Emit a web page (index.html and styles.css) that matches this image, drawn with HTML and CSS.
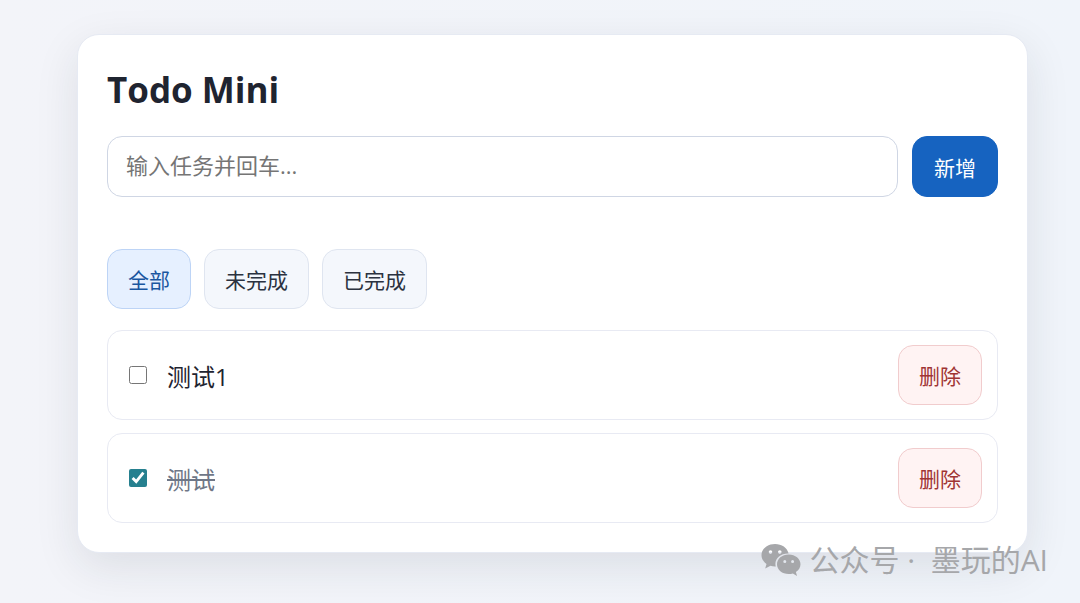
FILE: index.html
```html
<!DOCTYPE html>
<html lang="zh-CN">
  <head>
    <meta charset="UTF-8" />
    <meta name="viewport" content="width=device-width, initial-scale=1.0" />
    <link rel="stylesheet" href="styles.css">
    <title>Todo Mini</title>
  </head>
  <body>
    <main class="card">
      <h1>Todo Mini</h1>
      <form class="add-form">
        <input
          type="text"
          class="task-input"
          placeholder="输入任务并回车..."
          aria-label="输入任务"
        />
        <button type="submit" class="btn add-btn">新增</button>
      </form>

      <div class="filters">
        <button type="button" class="btn active">全部</button>
        <button type="button" class="btn">未完成</button>
        <button type="button" class="btn">已完成</button>
      </div>

      <ul class="list">
        <li class="item">
          <input type="checkbox" id="task-1" />
          <label for="task-1">测试1</label>
          <button type="button" class="btn delete-btn">删除</button>
        </li>
        <li class="item done">
          <input type="checkbox" id="task-2" checked />
          <label for="task-2">测试</label>
          <button type="button" class="btn delete-btn">删除</button>
        </li>
      </ul>
    </main>

    <div class="watermark">
      <svg class="wechat" viewBox="0 0 40 34" aria-hidden="true">
        <path fill-rule="evenodd" d="M14 1C6.500 1 .5 5.800 .5 12.200c0 3.500 1.900 6.600 5 8.700L4.200 25.500l5.300-2.700c1.700.5 3.300.7 5.300.6-.3-1-.4-1.700-.4-2.500 0-5.800 5.500-10.400 12.400-10.400h.8C26.300 4.800 20.800 1 14 1zM9.500 7.300a1.800 1.800 0 1 1 0 3.600 1.800 1.800 0 0 1 0-3.600zm9.300 0a1.800 1.800 0 1 1 0 3.600 1.800 1.800 0 0 1 0-3.600z"/>
        <path fill-rule="evenodd" d="M27.700 11.500c-6.600 0-11.700 4.300-11.700 9.800s5.100 9.800 11.700 9.800c1.500 0 2.900-.2 4.200-.6l4.100 2.500-1.100-3.900c2.800-1.900 4.600-4.500 4.600-7.800 0-5.500-5.200-9.800-11.800-9.800zM23.800 17a1.500 1.500 0 1 1 0 3 1.500 1.500 0 0 1 0-3zm7.800 0a1.500 1.500 0 1 1 0 3 1.500 1.500 0 0 1 0-3z"/>
      </svg>
      <span>公众号 ·&nbsp; 墨玩的AI</span>
    </div>
  </body>
</html>
```
FILE: styles.css
```css
* {
  box-sizing: border-box;
  font-family: "Open Sans", "Noto Sans CJK SC", sans-serif;
}
body {
  margin: 0;
  min-height: 100vh;
  padding: 34px 52px 50px 77px;
  background: linear-gradient(90deg, #f3f4f9, #f0f4fa);
  color: #1f2430;
}

.card {
  background: #fff;
  border: 1px solid #e6eaf3;
  border-radius: 22px;
  padding: 29px;
  box-shadow: 0 14px 44px rgba(30, 36, 50, 0.1);
}

h1 {
  margin: 0 0 20px;
  font-size: 35px;
  line-height: 52px;
}

.add-form {
  display: flex;
  gap: 14px;
  margin-bottom: 52px;
}
.task-input {
  flex: 1;
  min-width: 0;
  height: 61px;
  padding: 0 18px 4px;
  border: 1px solid #cfd6e4;
  border-radius: 15px;
  outline: none;
  background: #fff;
  color: #1f2430;
  font-size: 22px;
}
.task-input::placeholder {
  color: #757575;
}

.btn {
  height: 60px;
  padding: 0 20px;
  border: 1px solid #dfe5f0;
  border-radius: 15px;
  background: #f4f7fc;
  color: #2b3240;
  font-size: 21px;
  cursor: pointer;
}
.add-btn {
  height: 61px;
  padding: 0 21px;
  background: #1663c0;
  border-color: #1663c0;
  color: #fff;
}

.filters {
  display: flex;
  gap: 13px;
  margin-bottom: 21px;
}
.active {
  background: #e6f0ff;
  border-color: #bdd4f6;
  color: #1a569f;
}

.list {
  display: flex;
  flex-direction: column;
  gap: 13px;
  margin: 0;
  padding: 0;
  list-style: none;
}
.item {
  display: flex;
  align-items: center;
  padding: 14px 15px 14px 21px;
  border: 1px solid #e8eaf3;
  border-radius: 15px;
}
.item input {
  width: 18px;
  height: 18px;
  margin: 0 20px 0 0;
  accent-color: #26808f;
}
.item label {
  flex: 1;
  font-size: 24px;
}
.done label {
  color: #6f7787;
  text-decoration: line-through;
}
.delete-btn {
  background: #fff3f3;
  border-color: #f1cccd;
  color: #9f3434;
}

/* floats over the bottom right corner of the card */
.watermark {
  position: absolute;
  right: 32px;
  bottom: 22px;
  display: flex;
  align-items: center;
  gap: 8px;
  color: #a6a7aa;
  font-size: 30px;
  line-height: 42px;
}
.wechat {
  width: 40px;
  height: 34px;
  fill: currentColor;
}
```
